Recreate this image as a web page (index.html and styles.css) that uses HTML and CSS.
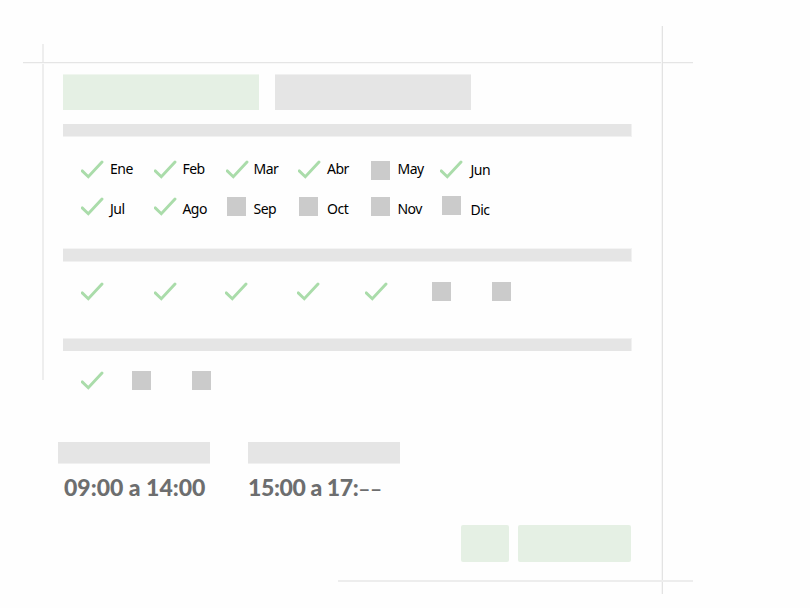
FILE: index.html
```
<!DOCTYPE html>
<html lang="es">
<head>
  <meta charset="UTF-8" />
  <meta name="viewport" content="width=device-width, initial-scale=1.0"/>
  <title>Horario</title>
  <link rel="stylesheet" href="styles.css">
</head>
<body>
  <svg class="symbols" width="0" height="0">
    <symbol id="check" viewBox="0 0 23 19">
      <path d="M1.2 10.9 7.3 16.7 21 2" fill="none" stroke="#aadcaa" stroke-width="2.9" stroke-linecap="round"/>
    </symbol>
    <symbol id="box" viewBox="0 0 23 19">
      <rect x="0" y="0" width="19" height="19" fill="#cbcbcb"/>
    </symbol>
  </svg>

  <div class="guide guide-left"></div>
  <div class="guide guide-top"></div>
  <div class="guide guide-right"></div>
  <div class="guide guide-bottom"></div>

  <main class="panel">
    <div class="tabs">
      <div class="tab active"></div>
      <div class="tab"></div>
    </div>

    <div class="bar"></div>
    <div class="months">
      <svg class="icon"><use href="#check"/></svg><span>Ene</span>
      <svg class="icon"><use href="#check"/></svg><span>Feb</span>
      <svg class="icon"><use href="#check"/></svg><span>Mar</span>
      <svg class="icon"><use href="#check"/></svg><span>Abr</span>
      <svg class="icon low"><use href="#box"/></svg><span>May</span>
      <svg class="icon"><use href="#check"/></svg><span class="low">Jun</span>
      <svg class="icon"><use href="#check"/></svg><span>Jul</span>
      <svg class="icon"><use href="#check"/></svg><span>Ago</span>
      <svg class="icon off"><use href="#box"/></svg><span>Sep</span>
      <svg class="icon off"><use href="#box"/></svg><span>Oct</span>
      <svg class="icon"><use href="#box"/></svg><span>Nov</span>
      <svg class="icon last"><use href="#box"/></svg><span class="low">Dic</span>
    </div>

    <div class="bar bar-days"></div>
    <div class="days">
      <svg class="icon"><use href="#check"/></svg>
      <svg class="icon"><use href="#check"/></svg>
      <svg class="icon"><use href="#check"/></svg>
      <svg class="icon"><use href="#check"/></svg>
      <svg class="icon"><use href="#check"/></svg>
      <svg class="icon"><use href="#box"/></svg>
      <svg class="icon"><use href="#box"/></svg>
    </div>

    <div class="bar bar-options"></div>
    <div class="options">
      <svg class="icon"><use href="#check"/></svg>
      <svg class="icon"><use href="#box"/></svg>
      <svg class="icon"><use href="#box"/></svg>
    </div>

    <div class="times">
      <div class="time">
        <div class="time-head"></div>
        <p class="morning">09:00 a 14:00</p>
      </div>
      <div class="time">
        <div class="time-head"></div>
        <p class="evening">15:00 a 17:<span class="dashes">––</span></p>
      </div>
    </div>

    <div class="actions">
      <div class="action small"></div>
      <div class="action"></div>
    </div>
  </main>
</body>
</html>
```

FILE: styles.css
```
body {
  margin: 0;
  position: relative;
  width: 810px;
  height: 608px;
  overflow: hidden;
  background-color: #fefefe;
  font-family: "Noto Sans", "Open Sans", sans-serif;
  color: #000;
}
.symbols {
  position: absolute;
}

/* thin guide lines crossing at the corners */
.guide {
  position: absolute;
}
.guide-left {
  left: 42px;
  top: 44px;
  width: 2px;
  height: 336px;
  background-color: #eeeeee;
}
.guide-top {
  left: 23px;
  top: 62px;
  width: 670px;
  height: 1px;
  background-color: #e5e5e5;
  box-shadow: 0 1px #f8f8f8;
}
.guide-right {
  left: 662px;
  top: 26px;
  width: 1px;
  height: 568px;
  background-color: #e3e3e3;
  box-shadow: -1px 0 #f6f6f6;
}
.guide-bottom {
  left: 338px;
  top: 580px;
  width: 355px;
  height: 2px;
  background-color: #ededed;
}

.panel {
  box-sizing: border-box;
  width: 632px;
  padding: 74px 0 0 63px;
}
.tabs {
  display: flex;
  gap: 16px;
  margin-bottom: 14px;
}
.tab {
  box-sizing: border-box;
  width: 196px;
  height: 36px;
  background-color: #e5e5e5;
  border-top: 1px solid #f0f0f0;
}
.tab.active {
  background-color: #e5f0e4;
  border-top-color: #f0f6ef;
}
.bar {
  box-sizing: border-box;
  height: 13px;
  background-color: #e5e5e5;
  border-right: 1px solid #f1f1f1;
  border-bottom: 1px solid #f1f1f1;
}
.bar-days {
  height: 14px;
  border-top: 1px solid #f4f4f4;
}
.bar-options {
  border-top: 1px solid #f1f1f1;
  border-bottom: none;
}
.icon {
  display: block;
  width: 23px;
  height: 19px;
}

.months {
  box-sizing: border-box;
  display: grid;
  grid-template-columns: 29px 44px 28.4px 43.6px 27.5px 44.5px 29px 44px 26.5px 42.5px 30.5px 40px;
  grid-template-rows: 37.4px 37.6px;
  height: 111px;
  padding: 23px 0 0 18px;
}
.months span {
  margin-top: -1px;
  font-size: 14px;
  line-height: 19px;
  letter-spacing: -0.5px;
}
.months span:nth-of-type(n+7) {
  padding-top: 3px;
}
.months .icon.low {
  margin-top: 1px;
}
.months span.low {
  margin-top: 0;
}
.months .off {
  margin-left: 1px;
}
.months .last {
  margin: -1px 0 0 2px;
}

.days {
  box-sizing: border-box;
  display: grid;
  grid-template-columns: 73px 71.4px 72px 68px 67px 60px 23px;
  height: 76px;
  padding: 20px 0 0 18px;
}
.options {
  box-sizing: border-box;
  display: grid;
  grid-template-columns: 51px 60px 23px;
  height: 91px;
  padding: 20px 0 0 18px;
}

.times {
  display: flex;
  gap: 38px;
  margin-left: -5px;
  height: 83px;
}
.time {
  width: 152px;
}
.time-head {
  box-sizing: border-box;
  height: 22px;
  background-color: #e5e5e5;
  border-bottom: 1px solid #f0f0f0;
}
.time p {
  margin: 9px 0 0;
  font-family: Lato, sans-serif;
  font-size: 23px;
  font-weight: 900;
  line-height: 28px;
  color: #6d6e6f;
  white-space: nowrap;
}
.time .morning {
  padding-left: 6px;
}
.time .evening {
  letter-spacing: -0.4px;
}
.time .dashes {
  font-size: 21px;
  font-weight: 700;
  letter-spacing: -0.6px;
}

.actions {
  display: flex;
  justify-content: flex-end;
  gap: 9px;
  padding-right: 1px;
}
.action {
  width: 113px;
  height: 37px;
  border-radius: 2px;
  background-color: #e5f0e4;
}
.action.small {
  width: 48px;
}
```
